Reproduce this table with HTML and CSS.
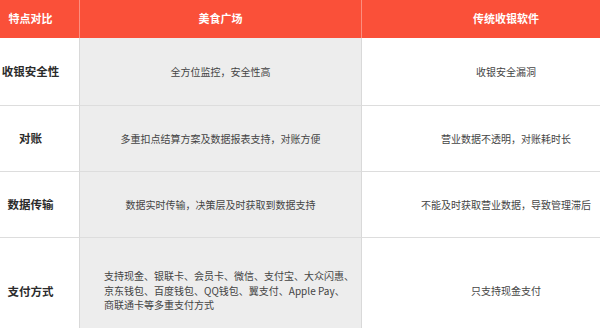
FILE: index.html
```html
<!DOCTYPE html>
<html lang="zh-CN">
<head>
<meta charset="utf-8">
<title>特点对比</title>
<link rel="stylesheet" href="styles.css">
</head>
<body>
<div class="table">
  <div class="cell head c1"><span class="lbl">特点对比</span></div>
  <div class="cell head c2">美食广场</div>
  <div class="cell head c3">传统收银软件</div>

  <div class="cell c1 r1"><span class="lbl">收银安全性</span></div>
  <div class="cell c2 r1">全方位监控，安全性高</div>
  <div class="cell c3 r1">收银安全漏洞</div>

  <div class="cell c1"><span class="lbl">对账</span></div>
  <div class="cell c2">多重扣点结算方案及数据报表支持，对账方便</div>
  <div class="cell c3">营业数据不透明，对账耗时长</div>

  <div class="cell c1"><span class="lbl">数据传输</span></div>
  <div class="cell c2">数据实时传输，决策层及时获取到数据支持</div>
  <div class="cell c3">不能及时获取营业数据，导致管理滞后</div>

  <div class="cell c1 last"><span class="lbl">支付方式</span></div>
  <div class="cell c2 last multi"><p class="lines">支持现金、银联卡、会员卡、微信、支付宝、大众闪惠、<br>京东钱包、百度钱包、QQ钱包、翼支付、Apple Pay、<br>商联通卡等多重支付方式</p></div>
  <div class="cell c3 last">只支持现金支付</div>
</div>
</body>
</html>
```
FILE: styles.css
```css
html, body {
  margin: 0;
  padding: 0;
  overflow: hidden;
  background: #ffffff;
}
body {
  width: 600px;
  height: 328px;
  font-family: "Noto Sans CJK SC", "Noto Sans", sans-serif;
}
.table {
  display: grid;
  grid-template-columns: 80px 282px 238px;
  grid-template-rows: 38px 68px 66px 66px 90px;
  width: 600px;
}
.cell {
  box-sizing: border-box;
  display: flex;
  align-items: center;
  justify-content: center;
  text-align: center;
  font-size: 10px;
  color: #444444;
  border-bottom: 1px solid #dddddd;
  border-right: 1px solid #d9d9d9;
  line-height: 1.4;
}
.cell.c2 {
  background: #ededed;
}
.cell.c3 {
  border-right: none;
  padding-left: 50px;
}
.cell.c1 {
  justify-content: flex-start;
  padding-right: 18px;
}
.cell.head {
  background: #fa5039;
  color: #ffffff;
  font-weight: bold;
  font-size: 11px;
  border-bottom: none;
  border-right-color: rgba(255, 255, 255, 0.35);
}
.cell.head.c3 {
  border-right: none;
}
.lbl {
  display: block;
  width: 62px;
  text-align: center;
}
.cell.c1:not(.head) {
  font-size: 11.5px;
  font-weight: bold;
  color: #2b2b2b;
}
.cell.last {
  border-bottom: none;
}
.cell.multi {
  justify-content: flex-start;
  text-align: left;
  padding-left: 24px;
  padding-top: 16px;
}
.lines {
  margin: 0;
  line-height: 14.5px;
  font-size: 10px;
}
.cell.c1.last,
.cell.c3.last {
  padding-top: 16px;
}
```
